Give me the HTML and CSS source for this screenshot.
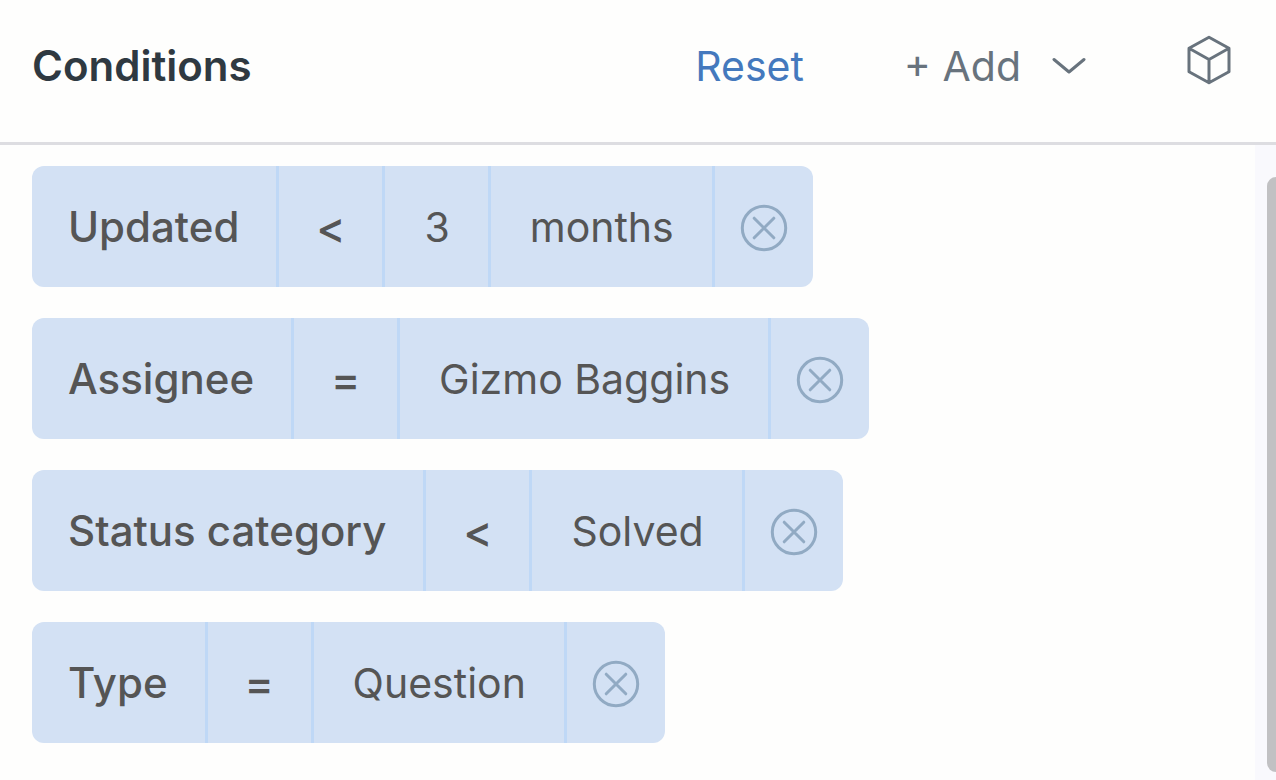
FILE: index.html
```html
<!DOCTYPE html>
<html lang="en">
<head>
  <meta charset="UTF-8">
  <meta name="viewport" content="width=device-width, initial-scale=1.0">
  <title>Conditions</title>
  <link rel="stylesheet" href="styles.css">
</head>
<body>
  <!-- Shared icons -->
  <svg class="icon-defs" aria-hidden="true">
    <symbol id="icon-remove" viewBox="0 0 48 48">
      <circle cx="24" cy="24" r="21.7"/>
      <path d="M14.2 14.2l19.6 19.6M33.8 14.2L14.2 33.8"/>
    </symbol>
  </svg>

  <header class="header">
    <h1>Conditions</h1>
    <button type="button" class="btn btn-reset">Reset</button>
    <button type="button" class="btn btn-add">
      + Add
      <svg class="chevron" viewBox="0 0 34 18" aria-hidden="true">
        <path d="M2 2.5L17 15L32 2.5"/>
      </svg>
    </button>
    <button type="button" class="btn btn-cube" aria-label="Apps">
      <svg class="cube" viewBox="0 0 46 50" aria-hidden="true">
        <path d="M23 2.3L43 13.3V36.7L23 47.7L3 36.7V13.3ZM3 13.3L23 24.5L43 13.3M23 24.5V47.7"/>
      </svg>
    </button>
  </header>

  <main class="content">
    <ul class="conditions">
      <li class="condition">
        <span class="field">Updated</span>
        <span class="operator">&lt;</span>
        <span class="value">3</span>
        <span class="value">months</span>
        <button type="button" class="remove" aria-label="Remove Updated"><svg><use href="#icon-remove"/></svg></button>
      </li>
      <li class="condition">
        <span class="field">Assignee</span>
        <span class="operator">=</span>
        <span class="value">Gizmo Baggins</span>
        <button type="button" class="remove" aria-label="Remove Assignee"><svg><use href="#icon-remove"/></svg></button>
      </li>
      <li class="condition">
        <span class="field">Status category</span>
        <span class="operator">&lt;</span>
        <span class="value">Solved</span>
        <button type="button" class="remove" aria-label="Remove Status category"><svg><use href="#icon-remove"/></svg></button>
      </li>
      <li class="condition">
        <span class="field">Type</span>
        <span class="operator">=</span>
        <span class="value">Question</span>
        <button type="button" class="remove" aria-label="Remove Type"><svg><use href="#icon-remove"/></svg></button>
      </li>
    </ul>
    <div class="scroll-track">
      <div class="scroll-thumb"></div>
    </div>
  </main>
</body>
</html>
```
FILE: styles.css
```css
* {
  box-sizing: border-box;
}

body {
  display: flex;
  flex-direction: column;
  min-height: 100vh;
  margin: 0;
  background: #fefefd;
  font-family: Inter, "Liberation Sans", sans-serif;
  font-size: 41px;
  line-height: 50px;
}

.icon-defs {
  display: none;
}

svg {
  display: block;
  fill: none;
  stroke: currentColor;
  stroke-linecap: round;
  stroke-linejoin: round;
}

/* Header */
.header {
  display: flex;
  align-items: center;
  padding: 35px 44px 45px 32px;
  border-bottom: 3px solid #dddde1;
}

.header h1 {
  flex: 1;
  margin: 0;
  font-size: 42px;
  font-weight: 600;
  line-height: 62px;
  color: #2f3941;
}

.btn {
  display: flex;
  align-items: center;
  padding: 0;
  border: none;
  background: none;
  font: inherit;
  color: #68737d;
  cursor: pointer;
}

.btn-reset {
  margin-right: 100px;
  color: #4479bd;
}

.btn-add {
  gap: 31px;
  margin-right: 100px;
}

.btn-cube {
  align-self: flex-start;
}

.chevron {
  width: 34px;
  height: 18px;
  stroke-width: 3;
}

.cube {
  width: 46px;
  height: 50px;
  stroke-width: 3;
}

/* Condition list */
.content {
  display: flex;
  flex: 1;
}

.conditions {
  display: flex;
  flex: 1;
  flex-direction: column;
  align-items: flex-start;
  gap: 31px;
  margin: 0;
  padding: 21px 32px;
  list-style: none;
}

.condition {
  display: flex;
  height: 121px;
  border-radius: 12px;
  background: #d3e1f4;
  color: #555;
}

.field,
.operator,
.value {
  display: flex;
  align-items: center;
  border-right: 3px solid #bfd8f6;
}

.field {
  padding: 0 37px 0 36px;
  font-size: 42px;
  font-weight: 500;
}

.operator {
  justify-content: center;
  width: 106px;
  font-size: 44px;
  font-weight: 500;
}

.value {
  padding: 0 38px 0 39px;
}

.remove {
  width: 98px;
  padding: 2px 25px 0;
  border: none;
  background: none;
  color: #91aac3;
  cursor: pointer;
}

.remove svg {
  width: 48px;
  height: 48px;
  stroke-width: 3;
}

/* Scrollbar */
.scroll-track {
  display: flex;
  width: 21px;
  padding: 32px 0 8px 12px;
  background: #f9f9fd;
}

.scroll-thumb {
  flex: 1;
  border-radius: 12px 0 0 12px;
  background: #c1c1c3;
}
```
